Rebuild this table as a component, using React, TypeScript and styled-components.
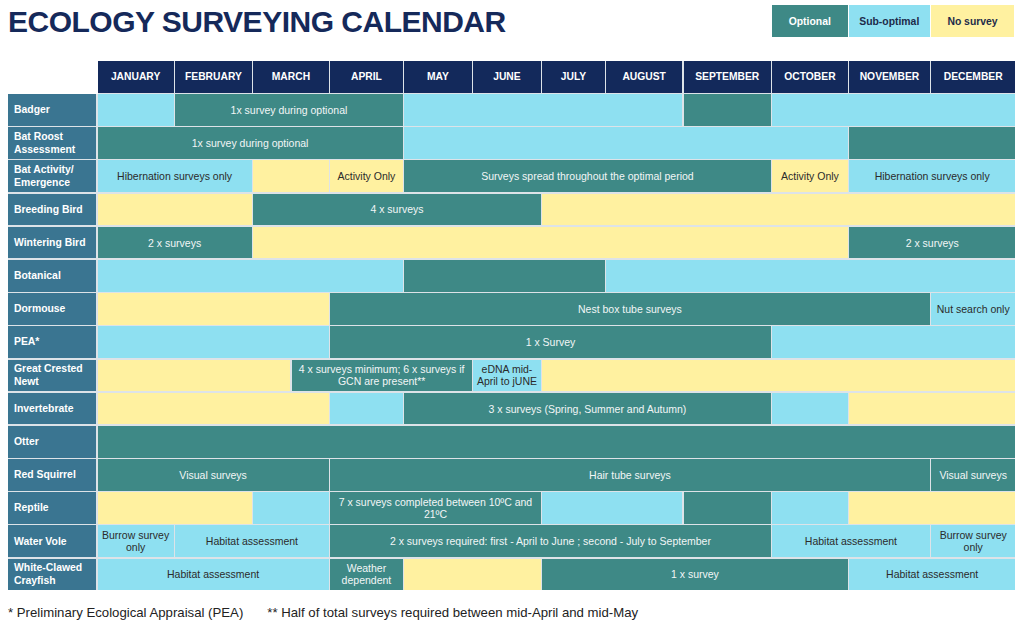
import React from "react";
import styled, { createGlobalStyle } from "styled-components";

const GlobalStyle = createGlobalStyle`
  html, body { margin: 0; padding: 0; background: #ffffff; }
  body { font-family: "Liberation Sans", Arial, sans-serif; }
`;

type Tone = "opt" | "sub" | "none";

const COLORS: Record<Tone, string> = {
  opt: "#3e8986",
  sub: "#8ee0f1",
  none: "#fff1a0",
};

const TEXT: Record<Tone, string> = {
  opt: "#f2f6f6",
  sub: "#2b2b2b",
  none: "#2b2b2b",
};

// grid line where a month starts; 3.5 = mid-March
const startLine = (m: number) => {
  if (m === 1) return 2;
  if (m === 2) return 3;
  if (m === 3) return 4;
  if (m === 3.5) return 5;
  return m + 2;
};
const endLine = (m: number) => (m === 3.25 ? 5 : m === 12 ? 15 : startLine(m + 1));

type Seg = [number, number, Tone, string?];

const MONTHS = [
  "JANUARY", "FEBRUARY", "MARCH", "APRIL", "MAY", "JUNE",
  "JULY", "AUGUST", "SEPTEMBER", "OCTOBER", "NOVEMBER", "DECEMBER",
];

const ROWS: { label: string; segs: Seg[] }[] = [
  { label: "Badger", segs: [[1, 1, "sub"], [2, 4, "opt", "1x survey during optional"], [5, 8, "sub"], [9, 9, "opt"], [10, 12, "sub"]] },
  { label: "Bat Roost\nAssessment", segs: [[1, 4, "opt", "1x survey during optional"], [5, 10, "sub"], [11, 12, "opt"]] },
  { label: "Bat Activity/\nEmergence", segs: [[1, 2, "sub", "Hibernation surveys only"], [3, 3, "none"], [4, 4, "none", "Activity Only"], [5, 9, "opt", "Surveys spread throughout the optimal period"], [10, 10, "none", "Activity Only"], [11, 12, "sub", "Hibernation surveys only"]] },
  { label: "Breeding Bird", segs: [[1, 2, "none"], [3, 6, "opt", "4 x surveys"], [7, 12, "none"]] },
  { label: "Wintering Bird", segs: [[1, 2, "opt", "2 x surveys"], [3, 10, "none"], [11, 12, "opt", "2 x surveys"]] },
  { label: "Botanical", segs: [[1, 4, "sub"], [5, 7, "opt"], [8, 12, "sub"]] },
  { label: "Dormouse", segs: [[1, 3, "none"], [4, 11, "opt", "Nest box tube surveys"], [12, 12, "sub", "Nut search only"]] },
  { label: "PEA*", segs: [[1, 3, "sub"], [4, 9, "opt", "1 x Survey"], [10, 12, "sub"]] },
  { label: "Great Crested\nNewt", segs: [[1, 3.25, "none"], [3.5, 5, "opt", "4 x surveys minimum; 6 x surveys if\nGCN are present**"], [6, 6, "sub", "eDNA mid-\nApril to jUNE"], [7, 12, "none"]] },
  { label: "Invertebrate", segs: [[1, 3, "none"], [4, 4, "sub"], [5, 9, "opt", "3 x surveys (Spring, Summer and Autumn)"], [10, 10, "sub"], [11, 12, "none"]] },
  { label: "Otter", segs: [[1, 12, "opt"]] },
  { label: "Red Squirrel", segs: [[1, 3, "opt", "Visual surveys"], [4, 11, "opt", "Hair tube surveys"], [12, 12, "opt", "Visual surveys"]] },
  { label: "Reptile", segs: [[1, 2, "none"], [3, 3, "sub"], [4, 6, "opt", "7 x surveys completed between 10ºC and\n21ºC"], [7, 8, "sub"], [9, 9, "opt"], [10, 10, "sub"], [11, 12, "none"]] },
  { label: "Water Vole", segs: [[1, 1, "sub", "Burrow survey\nonly"], [2, 3, "sub", "Habitat assessment"], [4, 9, "opt", "2 x surveys required: first - April to June ; second - July to September"], [10, 11, "sub", "Habitat assessment"], [12, 12, "sub", "Burrow survey\nonly"]] },
  { label: "White-Clawed\nCrayfish", segs: [[1, 3, "sub", "Habitat assessment"], [4, 4, "opt", "Weather\ndependent"], [5, 6, "none"], [7, 10, "opt", "1 x survey"], [11, 12, "sub", "Habitat assessment"]] },
];

const Page = styled.div`
  padding: 5px 9px 0 8px;
  width: 1024px;
  box-sizing: border-box;
`;

const TopBar = styled.div`
  display: flex;
  justify-content: space-between;
  align-items: flex-start;
  height: 32px;
`;

const Title = styled.h1`
  margin: 2px 0 0 0;
  font-family: "Liberation Sans", Arial, sans-serif;
  font-weight: 700;
  font-size: 30px;
  line-height: 30px;
  letter-spacing: -0.5px;
  color: #15295a;
`;

const Legend = styled.div`
  display: flex;
  gap: 1.5px;
  margin-right: 1px;
`;

const LegendItem = styled.div<{ $tone: Tone; $w: number }>`
  width: ${(p) => p.$w}px;
  height: 32px;
  display: flex;
  align-items: center;
  justify-content: center;
  background: ${(p) => COLORS[p.$tone]};
  color: ${(p) => (p.$tone === "opt" ? "#ffffff" : "#1d2b4a")};
  font-weight: 700;
  font-size: 10.4px;
`;

const Table = styled.div`
  margin-top: 24px;
  display: grid;
  grid-template-columns: 88px 76.2px 76.5px 37px 37px 72.5px 67.5px 67.5px 62.5px 76px 87px 75.5px 80.5px 84px;
  grid-template-rows: 31.5px repeat(15, 31.7px);
  gap: 1.5px;
  background: #dde3e8;
`;

const Corner = styled.div`
  grid-column: 1 / 2;
  grid-row: 1 / 2;
  background: #ffffff;
  margin: -1px -1.5px -1.5px -1px;
`;

const MonthHead = styled.div<{ $start: number; $end: number }>`
  grid-row: 1;
  grid-column: ${(p) => p.$start} / ${(p) => p.$end};
  background: #13295b;
  color: #ffffff;
  font-weight: 700;
  font-size: 10.3px;
  display: flex;
  align-items: center;
  justify-content: center;
`;

const RowLabel = styled.div<{ $row: number }>`
  grid-column: 1 / 2;
  grid-row: ${(p) => p.$row};
  background: #3a7591;
  color: #ffffff;
  font-weight: 700;
  font-size: 10.4px;
  line-height: 12.5px;
  padding: 1px 4px 0 6px;
  display: flex;
  align-items: center;
  white-space: pre-line;
`;

const Cell = styled.div<{ $row: number; $start: number; $end: number; $tone: Tone }>`
  grid-row: ${(p) => p.$row};
  grid-column: ${(p) => p.$start} / ${(p) => p.$end};
  background: ${(p) => COLORS[p.$tone]};
  color: ${(p) => TEXT[p.$tone]};
  font-size: 10.5px;
  line-height: 12px;
  padding: 0 2px;
  display: flex;
  align-items: center;
  justify-content: center;
  text-align: center;
  white-space: pre-line;
`;

const Footer = styled.div`
  margin-top: 15px;
  display: flex;
  gap: 24px;
  font-size: 13.2px;
  line-height: 16px;
  color: #222222;
`;

export default function App() {
  return (
    <>
      <GlobalStyle />
      <Page>
        <TopBar>
          <Title>ECOLOGY SURVEYING CALENDAR</Title>
          <Legend>
            <LegendItem $tone="opt" $w={75.5}>Optional</LegendItem>
            <LegendItem $tone="sub" $w={80.5}>Sub-optimal</LegendItem>
            <LegendItem $tone="none" $w={83}>No survey</LegendItem>
          </Legend>
        </TopBar>
        <Table>
          <Corner />
          {MONTHS.map((m, i) => (
            <MonthHead key={m} $start={startLine(i + 1)} $end={endLine(i + 1)}>
              {m}
            </MonthHead>
          ))}
          {ROWS.map((r, ri) => (
            <React.Fragment key={r.label}>
              <RowLabel $row={ri + 2}>{r.label}</RowLabel>
              {r.segs.map(([s, e, tone, text], si) => (
                <Cell
                  key={si}
                  $row={ri + 2}
                  $start={startLine(s)}
                  $end={endLine(e)}
                  $tone={tone}
                >
                  {text ?? ""}
                </Cell>
              ))}
            </React.Fragment>
          ))}
        </Table>
        <Footer>
          <span>* Preliminary Ecological Appraisal (PEA)</span>
          <span>** Half of total surveys required between mid-April and mid-May</span>
        </Footer>
      </Page>
    </>
  );
}
